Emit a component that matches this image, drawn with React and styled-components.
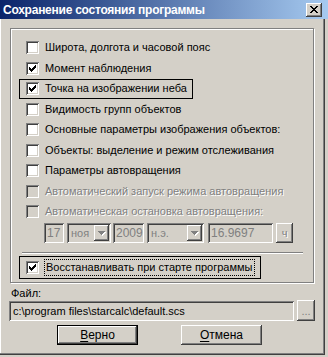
import React from "react";
import styled, { createGlobalStyle, css } from "styled-components";

const Global = createGlobalStyle`
  html, body { margin: 0; padding: 0; background: #d4d0c8; }
  body { font-family: "Liberation Sans", Arial, sans-serif; font-size: 11px; color: #000; }
`;

const Window = styled.div`
  width: 328px;
  height: 357px;
  display: flex;
  flex-direction: column;
  background: #d4d0c8;
  overflow: hidden;
`;

const TitleBar = styled.div`
  height: 19px;
  flex: none;
  display: flex;
  align-items: center;
  justify-content: space-between;
  padding: 0 6px 0 3px;
  background: linear-gradient(to right, #0a246a 0%, #a6caf0 100%);
  box-sizing: border-box;
`;

const TitleText = styled.span`
  color: #fff;
  font-weight: bold;
  font-size: 12px;
  letter-spacing: -0.25px;
`;

const raised = css`
  background: #d4d0c8;
  box-shadow: inset -1px -1px 0 #404040, inset 1px 1px 0 #fff,
    inset -2px -2px 0 #808080, inset 2px 2px 0 #d4d0c8;
`;

const sunken = css`
  box-shadow: inset 1px 1px 0 #808080, inset -1px -1px 0 #fff,
    inset 2px 2px 0 #404040, inset -2px -2px 0 #d4d0c8;
`;

const CloseBtn = styled.div`
  width: 16px;
  height: 14px;
  ${raised};
  display: flex;
  align-items: center;
  justify-content: center;
`;

const Client = styled.div`
  width: 325px;
  height: 336px;
  box-sizing: border-box;
  padding: 9px 0 0 10px;
  display: flex;
  flex-direction: column;
  align-items: flex-start;
  box-shadow: inset -1px -1px 0 #404040, inset -2px -2px 0 #808080,
    inset 1px 0 0 #fff;
`;

const GroupBox = styled.div`
  width: 304px;
  height: 255px;
  box-sizing: border-box;
  border: 1px solid #808080;
  box-shadow: inset 1px 1px 0 #fff, 1px 1px 0 #fff;
  padding: 8.5px 0 0 8px;
  display: flex;
  flex-direction: column;
  align-items: flex-start;
  flex: none;
`;

const Row = styled.div`
  height: ${(p) => p.$h || 20.5}px;
  box-sizing: border-box;
  border: 1px solid ${(p) => (p.$framed ? "#000" : "transparent")};
  padding: 0 5px 0 6px;
  display: flex;
  align-items: center;
  gap: ${(p) => p.$gap ?? 6}px;
  white-space: nowrap;
`;

const Label = styled.span`
  color: ${(p) => (p.$disabled ? "#808080" : "#000")};
  text-shadow: ${(p) => (p.$disabled ? "1px 1px 0 #fff" : "none")};
  line-height: 13px;
`;

const Focus = styled.span`
  border: 1px dotted #000;
  padding: 1px;
  line-height: 13px;
`;

const Box = styled.span`
  width: 13px;
  height: 13px;
  flex: none;
  box-sizing: border-box;
  background: ${(p) => (p.$disabled ? "#d4d0c8" : "#fff")};
  ${sunken};
  display: flex;
  align-items: center;
  justify-content: center;
`;

const Check = () => (
  <svg width="7" height="7" viewBox="0 0 7 7" shapeRendering="crispEdges">
    {[2, 3, 4, 3, 2, 1, 0].map((y, x) => (
      <rect key={x} x={x} y={y} width="1" height="3" fill="#000" />
    ))}
  </svg>
);

const Checkbox = ({ checked, disabled, children, framed, focus }) => (
  <Row $framed={framed} $h={focus ? 23 : undefined} $gap={focus ? 5 : 6}>
    <Box $disabled={disabled}>{checked && <Check />}</Box>
    {focus ? <Focus>{children}</Focus> : <Label $disabled={disabled}>{children}</Label>}
  </Row>
);

const DateRow = styled.div`
  display: flex;
  align-items: center;
  margin: 1px 0 0 25px;
  height: 20px;
`;

const Field = styled.div`
  width: ${(p) => p.$w}px;
  height: ${(p) => p.$h || 20}px;
  margin-left: ${(p) => p.$ml || 0}px;
  margin-top: ${(p) => p.$mt || 0}px;
  box-sizing: border-box;
  background: #d4d0c8;
  ${sunken};
  display: flex;
  align-items: center;
  padding: 0 2px 0 ${(p) => p.$pl ?? 3}px;
  color: ${(p) => (p.$grey ? "#808080" : "#000")};
  font-size: ${(p) => p.$fs || 11}px;
  flex: none;
  white-space: nowrap;
  overflow: hidden;
`;

const ComboText = styled.span`
  flex: 1;
`;

const ArrowBtn = styled.span`
  width: 15px;
  height: 16px;
  flex: none;
  ${raised};
  display: flex;
  align-items: center;
  justify-content: center;
`;

const Arrow = () => (
  <svg width="8" height="5" viewBox="0 0 8 5" shapeRendering="crispEdges">
    <path d="M1 1h7v1h-1v1h-1v1h-1v1h-1v-1h-1v-1h-1z" fill="#fff" />
    <path d="M0 0h7v1h-1v1h-1v1h-1v1h-1v-1h-1v-1h-1v-1h-1z" fill="#808080" />
  </svg>
);

const SmallBtn = styled.div`
  width: ${(p) => p.$w}px;
  height: ${(p) => p.$h}px;
  margin-left: ${(p) => p.$ml || 0}px;
  box-sizing: border-box;
  flex: none;
  ${raised};
  display: flex;
  align-items: center;
  justify-content: center;
  color: #808080;
  text-shadow: ${(p) => (p.$emboss ? "1px 1px 0 #fff" : "none")};
  font-size: ${(p) => p.$fs || 11}px;
`;

const Separator = styled.div`
  width: 281px;
  height: 1px;
  margin: 9px 0 2px 3px;
  background: #808080;
  border-bottom: 1px solid #fff;
  flex: none;
`;

const FileLabel = styled.div`
  padding: 3px 0 0 1px;
  height: 17px;
  box-sizing: border-box;
  line-height: 14px;
`;

const FileRow = styled.div`
  display: flex;
  align-items: flex-start;
  margin-left: -1px;
  height: 21px;
`;

const ButtonRow = styled.div`
  display: flex;
  gap: 43px;
  margin: 4px 0 0 47px;
`;

const PushButton = styled.div`
  width: 81px;
  height: 20px;
  box-sizing: border-box;
  display: flex;
  align-items: center;
  justify-content: center;
  background: #d4d0c8;
  font-size: 12px;
  box-shadow: ${(p) =>
    p.$default
      ? "inset 0 0 0 1px #000, inset -2px -2px 0 #404040, inset 2px 2px 0 #fff, inset -3px -3px 0 #808080"
      : "inset -1px -1px 0 #404040, inset 1px 1px 0 #fff, inset -2px -2px 0 #808080"};
`;

const U = styled.span`
  text-decoration: underline;
  text-underline-offset: 2px;
`;

export default function App() {
  return (
    <>
      <Global />
      <Window>
        <TitleBar>
          <TitleText>Сохранение состояния программы</TitleText>
          <CloseBtn>
            <svg width="8" height="7" viewBox="0 0 8 7" shapeRendering="crispEdges">
              <path d="M0 0h2l2 2.5l2-2.5h2l-3 3.5l3 3.5h-2l-2-2.5l-2 2.5h-2l3-3.5z" fill="#000" />
            </svg>
          </CloseBtn>
        </TitleBar>
        <Client>
          <GroupBox>
            <Checkbox>Широта, долгота и часовой пояс</Checkbox>
            <Checkbox checked>Момент наблюдения</Checkbox>
            <Checkbox checked framed>Точка на изображении неба</Checkbox>
            <Checkbox>Видимость групп объектов</Checkbox>
            <Checkbox>Основные параметры изображения объектов:</Checkbox>
            <Checkbox>Объекты: выделение и режим отслеживания</Checkbox>
            <Checkbox>Параметры автовращения</Checkbox>
            <Checkbox disabled>Автоматический запуск режима автовращения</Checkbox>
            <Checkbox disabled>Автоматическая остановка автовращения:</Checkbox>
            <DateRow>
              <Field $w={20} $grey $fs={12}>17</Field>
              <Field $w={44} $ml={3} $grey $pl={4}>
                <ComboText>ноя</ComboText>
                <ArrowBtn><Arrow /></ArrowBtn>
              </Field>
              <Field $w={31} $ml={2} $grey $fs={12}>2009</Field>
              <Field $w={57} $ml={3} $grey $pl={4}>
                <ComboText>н.э.</ComboText>
                <ArrowBtn><Arrow /></ArrowBtn>
              </Field>
              <Field $w={65} $ml={4} $grey $fs={12}>16.9697</Field>
              <SmallBtn $w={17} $h={20} $ml={3} $emboss>ч</SmallBtn>
            </DateRow>
            <Separator />
            <Checkbox checked framed focus>Восстанавливать при старте программы</Checkbox>
          </GroupBox>
          <FileLabel>Файл:</FileLabel>
          <FileRow>
            <Field $w={285} $h={20} $mt={1} $pl={4}>
              c:\program files\starcalc\default.scs
            </Field>
            <SmallBtn $w={18} $h={21} $ml={3}>...</SmallBtn>
          </FileRow>
          <ButtonRow>
            <PushButton $default><U>В</U>ерно</PushButton>
            <PushButton><U>О</U>тмена</PushButton>
          </ButtonRow>
        </Client>
      </Window>
    </>
  );
}
